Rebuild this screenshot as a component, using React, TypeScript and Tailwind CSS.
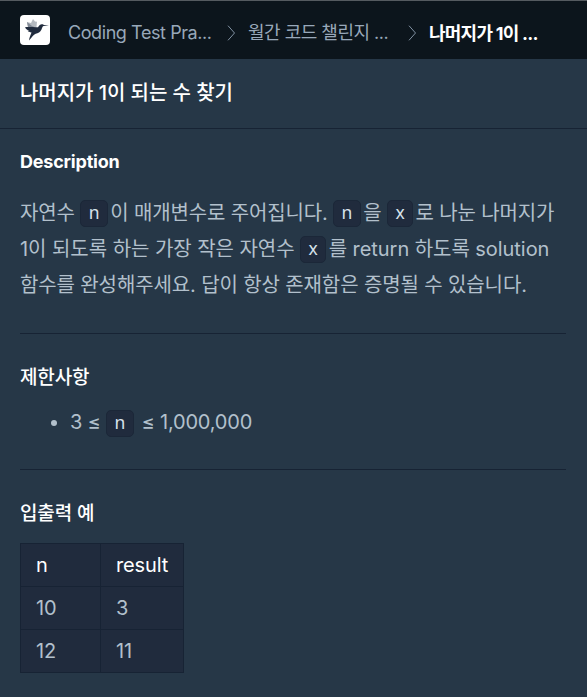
import React from 'react';

const examples = [
  { n: 10, result: 3 },
  { n: 12, result: 11 },
];

function Logo() {
  return (
    <svg className="block size-[30px] shrink-0" viewBox="0 0 30 30">
      <rect width="30" height="30" rx="4" fill="#fff" />
      <path d="M8 12 7 7l4 1 2-4 2 2.500 2 .3-.5 5.200z" fill="#b5bac0" />
      <path d="m8 12-1-5 5 4 3 1.300z" fill="#818995" />
      <path
        d="M5 12.200c5-.3 9.500.2 13 .1 1.200-2 2.400-3.100 4-3 .9 0 1.400.6 2 .8l5 .4-5.500.4c-1.100.5-1.500 2.100-2 3.600-1.200 2.700-3.500 3.800-5.800 4.300-2.400.8-3.700 3.600-6.700 6.700.3-3 1.700-5.600 2.500-8-1.700-.3-3-.7-4-1.700l2.100-.1C7.500 15.200 5.800 14.200 5 12.200z"
        fill="#202b3d"
      />
    </svg>
  );
}

function Chevron() {
  return (
    <svg className="mt-1.5 h-4 w-[9px] shrink-0" viewBox="0 0 9 16" fill="none" stroke="#8191a2">
      <path d="m1 .7 6.500 7.300L1 15.300" />
    </svg>
  );
}

function Code({ children }: { children: React.ReactNode }) {
  return (
    <code className="mr-[2.500px] mb-0.5 inline-flex h-[27px] items-center justify-center rounded-[5px] border border-[#1b2738] bg-[#202b3d] px-[7.400px] pb-px align-middle font-['Noto_Sans',sans-serif] text-[17.500px] leading-none tracking-normal text-[#d7e2eb]">
      {children}
    </code>
  );
}

export default function App() {
  return (
    <div className="h-[697px] w-full overflow-hidden bg-[#263747] font-['Inter','Noto_Sans_CJK_KR',sans-serif] text-[20px] tracking-[-0.12px] text-[#b2c0cc]">
      <header className="flex h-[59px] items-center border-t border-[#555b60] bg-[#0c151c] pl-5 text-[18px] whitespace-nowrap text-[#98a8b9]">
        <Logo />
        <span className="mt-1 ml-[18px] w-[159px] tracking-[-0.42px]">Coding Test Pra...</span>
        <Chevron />
        <span className="mt-1 ml-3 w-40 tracking-[-0.5px]">월간 코드 챌린지 ...</span>
        <Chevron />
        <strong className="mt-1.5 ml-3 font-bold tracking-[-0.75px] text-white">나머지가 1이 ...</strong>
      </header>

      <div className="flex h-[70px] items-center border-b border-[#172334] pl-5">
        <h1 className="-mt-px font-medium tracking-[-0.05px] text-white">나머지가 1이 되는 수 찾기</h1>
      </div>

      <main className="pt-[19px] pr-[21px] pl-5">
        <h2 className="text-[18px] leading-7 font-bold tracking-[-0.2px] text-white">Description</h2>

        <div className="mt-[19px] leading-9 whitespace-nowrap">
          <p className="h-9 tracking-[-0.15px]">자연수 <Code>n</Code>이 매개변수로 주어집니다. <Code>n</Code>을 <Code>x</Code>로 나눈 나머지가</p>
          <p className="h-9 tracking-[-0.05px]">1이 되도록 하는 가장 작은 자연수 <Code>x</Code>를 return 하도록 solution</p>
          <p className="h-9">함수를 완성해주세요. 답이 항상 존재함은 증명될 수 있습니다.</p>
        </div>

        <hr className="mt-[30px] border-[#172334]" />

        <h3 className="mt-[30px] text-[19px] leading-7 font-medium text-white">제한사항</h3>
        <div className="mt-[13px] flex h-9 items-center pl-[31px] whitespace-nowrap">
          <span className="mr-[13px] size-1.5 rounded-full bg-[#b2c0cc]" />
          <span className="tracking-[-0.2px]">3 ≤ <Code>n</Code> ≤ 1,000,000</span>
        </div>

        <hr className="mt-7 border-[#172334]" />

        <h3 className="mt-[30px] text-[19px] leading-7 font-medium text-white">입출력 예</h3>
        <table className="mt-[15px] w-[164px] table-fixed border-collapse bg-[#202b3d] text-left">
          <thead>
            <tr className="h-[43px] text-white">
              <th className="w-20 border border-[#172334] px-[15px] pb-px font-normal">n</th>
              <th className="border border-[#172334] px-[15px] pb-px font-normal">result</th>
            </tr>
          </thead>
          <tbody>
            {examples.map((row) => (
              <tr key={row.n} className="h-[43px]">
                <td className="border border-[#172334] px-[15px] pb-px">{row.n}</td>
                <td className="border border-[#172334] px-[15px] pb-px">{row.result}</td>
              </tr>
            ))}
          </tbody>
        </table>
      </main>
    </div>
  );
}
